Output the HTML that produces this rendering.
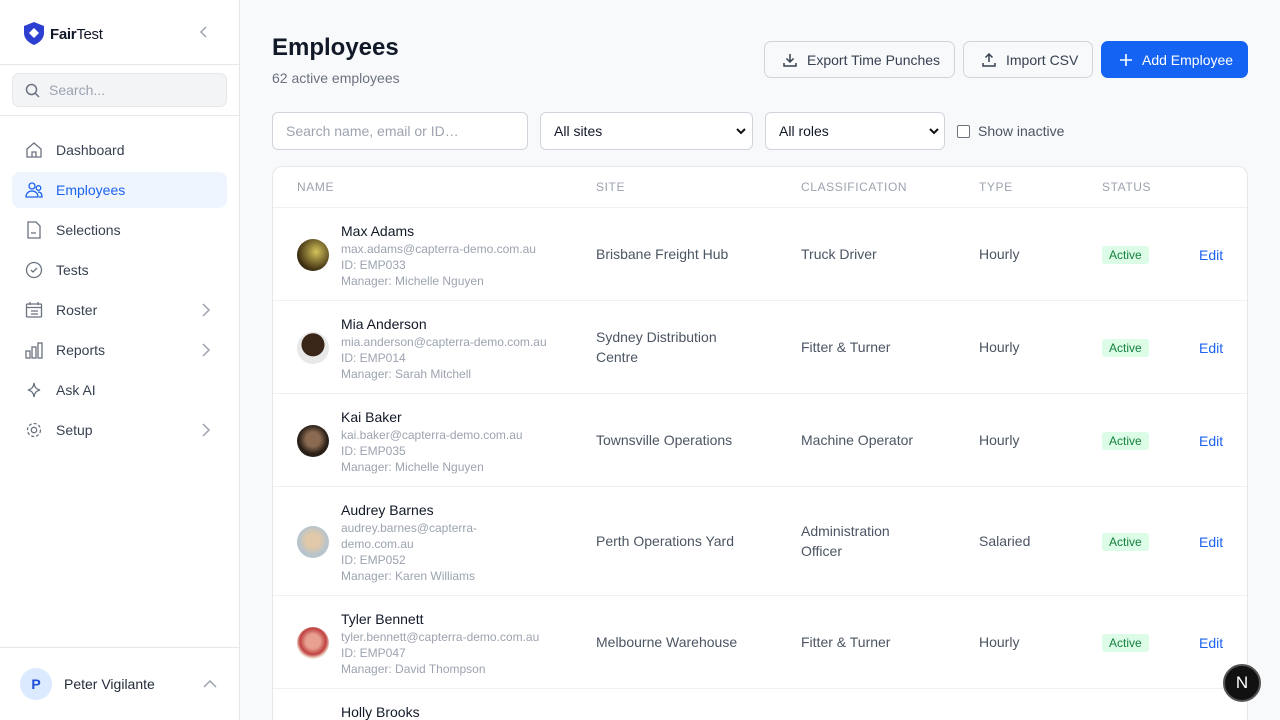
<!DOCTYPE html>
<html style="width:1280px;height:720px;overflow:hidden"><head><meta charset="utf-8"><style>
*{box-sizing:border-box;margin:0;padding:0}
body{width:1280px;height:720px;overflow:hidden;background:#f8f9fb;font-family:"Liberation Sans",sans-serif;color:#111827;position:relative}
.sb{position:absolute;left:0;top:0;width:240px;height:720px;background:#fff;border-right:1px solid #e5e7eb}
.abs{position:absolute}
.nav{position:absolute;left:12px;width:215px;height:36px;border-radius:8px;display:flex;align-items:center;padding-left:44px;font-size:14px;color:#374151}
.nav svg{position:absolute;left:13px;top:9px}
.btn{position:absolute;top:41px;height:37px;border:1px solid #d1d5db;border-radius:7px;background:#f8f9fb;font-size:14px;color:#374151;display:flex;align-items:center}
.in{position:absolute;top:112px;height:38px;border:1px solid #d1d5db;border-radius:6px;background:#fff;font-size:14px;display:flex;align-items:center;padding-left:13px}
.card{position:absolute;left:272px;top:166px;width:976px;height:554px;background:#fff;border:1px solid #e5e7eb;border-bottom:none;border-radius:10px 10px 0 0;overflow:hidden}
.th{position:absolute;top:180px;font-size:12px;color:#9ca3af;letter-spacing:.6px}
.row{position:absolute;left:273px;width:974px;border-top:1px solid #eef0f2;overflow:hidden}
.av{position:absolute;left:24px;width:32px;height:32px;border-radius:50%}
.nm{position:absolute;left:68px;font-size:14px;color:#111827}
.sm{position:absolute;left:68px;font-size:12px;color:#9ca3af;line-height:16px}
.c{position:absolute;font-size:14px;color:#4b5563;line-height:20px}
.bd{position:absolute;left:829px;background:#dcfce7;color:#15803d;font-size:12px;padding:2px 7px;border-radius:3px}
.ed{position:absolute;left:926px;font-size:14px;color:#1d63ed}
</style></head><body>
<div class="sb">
 <svg class="abs" style="left:23px;top:21px" width="22" height="25" viewBox="0 0 22 25"><path d="M11 1L21 5V12C21 18 16 22 11 24C6 22 1 18 1 12V5Z" fill="#2d3fd0"/><path d="M11 7L16 12L11 17L6 12Z" fill="#fff"/></svg>
 <div class="abs" style="left:50px;top:26px;font-size:15px;color:#111827;letter-spacing:-.3px"><b>Fair</b>Test</div>
 <svg class="abs" style="left:199px;top:26px" width="10" height="12"><path d="M7 1L2 6L7 11" stroke="#9ca3af" fill="none" stroke-width="1.5"/></svg>
 <div class="abs" style="left:0;top:64px;width:239px;border-top:1px solid #e5e7eb"></div>
 <div class="abs" style="left:12px;top:73px;width:215px;height:34px;background:#f3f4f6;border:1px solid #e5e7eb;border-radius:7px"></div>
 <svg class="abs" style="left:25px;top:83px" width="15" height="15" fill="none" stroke="#6b7280" stroke-width="1.5"><circle cx="6.5" cy="6.5" r="5"/><path d="M10 10L14 14"/></svg>
 <div class="abs" style="left:49px;top:82px;font-size:14px;color:#9ca3af">Search...</div>
 <div class="abs" style="left:0;top:115px;width:239px;border-top:1px solid #e5e7eb"></div>
 <div class="nav" style="top:132px"><svg width="18" height="18" fill="none" stroke="#6b7280" stroke-width="1.3"><path d="M2 8L9 2L16 8V16H2Z M7 16V11H11V16"/></svg>Dashboard</div>
 <div class="nav" style="top:172px;background:#eef5ff;color:#1d63ed"><svg width="18" height="18" fill="none" stroke="#1d63ed" stroke-width="1.3"><circle cx="7" cy="5" r="3"/><path d="M1 16C1 12 4 10 7 10C10 10 13 12 13 16Z"/><circle cx="13.5" cy="7" r="2.3"/><path d="M13 11C16 11 17 13 17 16H14"/></svg>Employees</div>
 <div class="nav" style="top:212px"><svg width="18" height="18" fill="none" stroke="#6b7280" stroke-width="1.3"><path d="M3 1H11L15 5V17H3Z M6 12H11"/></svg>Selections</div>
 <div class="nav" style="top:252px"><svg width="18" height="18" fill="none" stroke="#6b7280" stroke-width="1.3"><circle cx="9" cy="9" r="7.5"/><path d="M6 9L8 11L12 7"/></svg>Tests</div>
 <div class="nav" style="top:292px"><svg width="18" height="18" fill="none" stroke="#6b7280" stroke-width="1.3"><rect x="1.5" y="3" width="15" height="13" rx="1"/><path d="M1.5 6.5H16.5M5 1V4M13 1V4M6 10H13M6 13H13"/></svg>Roster<svg width="10" height="14" fill="none" stroke="#9ca3af" stroke-width="1.5" style="left:189px;top:11px"><path d="M2 1L8 7L2 13"/></svg></div>
 <div class="nav" style="top:332px"><svg width="18" height="18" fill="none" stroke="#6b7280" stroke-width="1.3"><rect x="1" y="10" width="4" height="7"/><rect x="7" y="6" width="4" height="11"/><rect x="13" y="2" width="4" height="15"/></svg>Reports<svg width="10" height="14" fill="none" stroke="#9ca3af" stroke-width="1.5" style="left:189px;top:11px"><path d="M2 1L8 7L2 13"/></svg></div>
 <div class="nav" style="top:372px"><svg width="18" height="18" fill="none" stroke="#6b7280" stroke-width="1.3"><path d="M9 2C9.5 6 11 8 15 9C11 10 9.5 12 9 16C8.5 12 7 10 3 9C7 8 8.5 6 9 2Z"/></svg>Ask AI</div>
 <div class="nav" style="top:412px"><svg width="18" height="18" fill="none" stroke="#6b7280" stroke-width="1.3"><circle cx="9" cy="9" r="2.7"/><circle cx="9" cy="9" r="6.5" stroke-dasharray="3 2"/></svg>Setup<svg width="10" height="14" fill="none" stroke="#9ca3af" stroke-width="1.5" style="left:189px;top:11px"><path d="M2 1L8 7L2 13"/></svg></div>
 <div class="abs" style="left:0;top:647px;width:239px;border-top:1px solid #e5e7eb"></div>
 <div class="abs" style="left:20px;top:668px;width:32px;height:32px;border-radius:50%;background:#dbeafe;color:#1d4ed8;font-weight:bold;font-size:14px;text-align:center;line-height:32px">P</div>
 <div class="abs" style="left:64px;top:676px;font-size:14px;color:#1f2937">Peter Vigilante</div>
 <svg class="abs" style="left:203px;top:680px" width="14" height="9" fill="none" stroke="#9ca3af" stroke-width="1.5"><path d="M1 7L7 1L13 7"/></svg>
</div>

<div class="abs" style="left:272px;top:34px;font-size:24px;font-weight:bold;color:#111827">Employees</div>
<div class="abs" style="left:272px;top:70px;font-size:14px;color:#6b7280">62 active employees</div>

<div class="btn" style="left:764px;width:191px;padding-left:17px"><svg width="16" height="16" fill="none" stroke="#374151" stroke-width="1.5" style="margin-right:9px"><path d="M8 2V10M4.5 6.5L8 10L11.5 6.5M2 11V14H14V11"/></svg>Export Time Punches</div>
<div class="btn" style="left:963px;width:130px;padding-left:17px"><svg width="16" height="16" fill="none" stroke="#374151" stroke-width="1.5" style="margin-right:9px"><path d="M8 10V2M4.5 5.5L8 2L11.5 5.5M2 11V14H14V11"/></svg>Import CSV</div>
<div class="btn" style="left:1101px;width:147px;padding-left:16px;background:#1463f3;border-color:#1463f3;color:#fff"><svg width="16" height="16" fill="none" stroke="#fff" stroke-width="1.6" style="margin-right:8px"><path d="M8 2V14M2 8H14"/></svg>Add Employee</div>

<div class="in" style="left:272px;width:256px;color:#9ca3af">Search name, email or ID…</div>
<div class="in" style="left:540px;width:213px;color:#111827">All sites<svg class="abs" style="left:195px;top:15px" width="10" height="7" fill="none" stroke="#111" stroke-width="2"><path d="M1 1L5 5L9 1"/></svg></div>
<div class="in" style="left:765px;width:180px;color:#111827">All roles<svg class="abs" style="left:163px;top:15px" width="10" height="7" fill="none" stroke="#111" stroke-width="2"><path d="M1 1L5 5L9 1"/></svg></div>
<div class="abs" style="left:957px;top:125px;width:13px;height:13px;border:1px solid #6b7280;border-radius:2px;background:#fff"></div>
<div class="abs" style="left:978px;top:123px;font-size:14px;color:#4b5563">Show inactive</div>

<div class="card"></div>
<div class="th" style="left:297px">NAME</div><div class="th" style="left:596px">SITE</div><div class="th" style="left:801px">CLASSIFICATION</div><div class="th" style="left:979px">TYPE</div><div class="th" style="left:1102px">STATUS</div>

<div class="row" style="top:207px;height:93px">
 <div class="av" style="top:31px;background:radial-gradient(circle at 60% 40%,#d4c35a,#3a2a10 70%)"></div>
 <div class="nm" style="top:15px">Max Adams</div>
 <div class="sm" style="top:33px">max.adams@capterra-demo.com.au<br>ID: EMP033<br>Manager: Michelle Nguyen</div>
 <div class="c" style="left:323px;top:36px">Brisbane Freight Hub</div><div class="c" style="left:528px;top:36px">Truck Driver</div><div class="c" style="left:706px;top:36px">Hourly</div>
 <div class="bd" style="top:38px">Active</div><div class="ed" style="top:39px">Edit</div>
</div>
<div class="row" style="top:300px;height:93px">
 <div class="av" style="top:31px;background:radial-gradient(circle at 50% 40%,#3a2618 45%,#e8e8e8 47%)"></div>
 <div class="nm" style="top:15px">Mia Anderson</div>
 <div class="sm" style="top:33px">mia.anderson@capterra-demo.com.au<br>ID: EMP014<br>Manager: Sarah Mitchell</div>
 <div class="c" style="left:323px;top:26px">Sydney Distribution<br>Centre</div><div class="c" style="left:528px;top:36px">Fitter &amp; Turner</div><div class="c" style="left:706px;top:36px">Hourly</div>
 <div class="bd" style="top:38px">Active</div><div class="ed" style="top:39px">Edit</div>
</div>
<div class="row" style="top:393px;height:93px">
 <div class="av" style="top:31px;background:radial-gradient(circle at 50% 45%,#8a6a50 30%,#2a2018 60%)"></div>
 <div class="nm" style="top:15px">Kai Baker</div>
 <div class="sm" style="top:33px">kai.baker@capterra-demo.com.au<br>ID: EMP035<br>Manager: Michelle Nguyen</div>
 <div class="c" style="left:323px;top:36px">Townsville Operations</div><div class="c" style="left:528px;top:36px">Machine Operator</div><div class="c" style="left:706px;top:36px">Hourly</div>
 <div class="bd" style="top:38px">Active</div><div class="ed" style="top:39px">Edit</div>
</div>
<div class="row" style="top:486px;height:109px">
 <div class="av" style="top:39px;background:radial-gradient(circle at 50% 45%,#e0c8a8 30%,#b8c4cc 60%)"></div>
 <div class="nm" style="top:15px">Audrey Barnes</div>
 <div class="sm" style="top:33px">audrey.barnes@capterra-<br>demo.com.au<br>ID: EMP052<br>Manager: Karen Williams</div>
 <div class="c" style="left:323px;top:44px">Perth Operations Yard</div><div class="c" style="left:528px;top:34px">Administration<br>Officer</div><div class="c" style="left:706px;top:44px">Salaried</div>
 <div class="bd" style="top:46px">Active</div><div class="ed" style="top:47px">Edit</div>
</div>
<div class="row" style="top:595px;height:93px">
 <div class="av" style="top:31px;background:radial-gradient(circle at 50% 45%,#e8a090 30%,#c04040 55%,#f0e0d0 70%)"></div>
 <div class="nm" style="top:15px">Tyler Bennett</div>
 <div class="sm" style="top:33px">tyler.bennett@capterra-demo.com.au<br>ID: EMP047<br>Manager: David Thompson</div>
 <div class="c" style="left:323px;top:36px">Melbourne Warehouse</div><div class="c" style="left:528px;top:36px">Fitter &amp; Turner</div><div class="c" style="left:706px;top:36px">Hourly</div>
 <div class="bd" style="top:38px">Active</div><div class="ed" style="top:39px">Edit</div>
</div>
<div class="row" style="top:688px;height:32px">
 <div class="nm" style="top:15px">Holly Brooks</div>
</div>
<div class="abs" style="left:1223px;top:664px;width:38px;height:38px;border-radius:50%;background:#111;border:2px solid #555;color:#fff;font-size:17px;text-align:center;line-height:34px">N</div>
</body></html>
